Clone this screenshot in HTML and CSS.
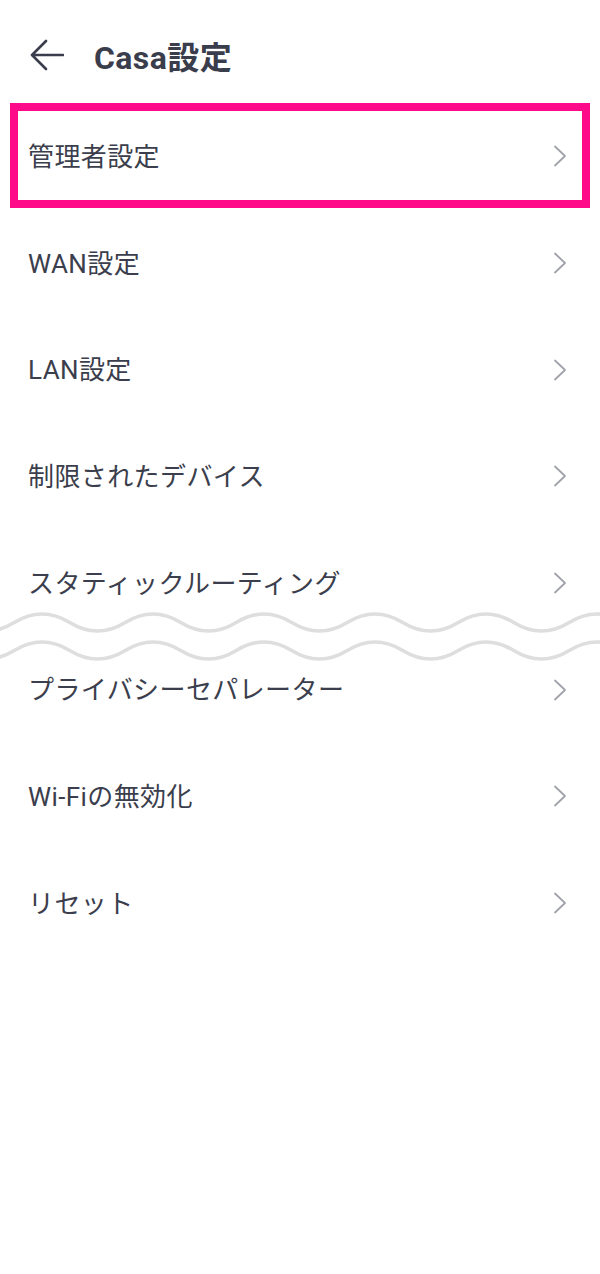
FILE: index.html
```html
<!DOCTYPE html>
<html lang="ja">
<head>
  <meta charset="UTF-8">
  <meta name="viewport" content="width=device-width, initial-scale=1.0">
  <title>Casa設定</title>
  <link rel="stylesheet" href="styles.css">
</head>
<body>
  <div class="header">
    <svg class="back" width="34" height="32" viewBox="0 0 34 32">
      <path d="M33 16H3M16 2L2 16l14 14" fill="none" stroke="#3a3d4b" stroke-width="2.6" stroke-linecap="round" stroke-linejoin="round"/>
    </svg>
    <h1 class="title">Casa設定</h1>
  </div>

  <div class="menu">
    <div class="row highlight"><span>管理者設定</span><svg class="chev" width="14" height="22" viewBox="0 0 14 22"><path d="M2 1.5l10 9.5-10 9.5" fill="none" stroke="#a1a3ab" stroke-width="1.8" stroke-linecap="round" stroke-linejoin="round"/></svg></div>
    <div class="row"><span>WAN設定</span><svg class="chev" width="14" height="22" viewBox="0 0 14 22"><path d="M2 1.5l10 9.5-10 9.5" fill="none" stroke="#a1a3ab" stroke-width="1.8" stroke-linecap="round" stroke-linejoin="round"/></svg></div>
    <div class="row"><span>LAN設定</span><svg class="chev" width="14" height="22" viewBox="0 0 14 22"><path d="M2 1.5l10 9.5-10 9.5" fill="none" stroke="#a1a3ab" stroke-width="1.8" stroke-linecap="round" stroke-linejoin="round"/></svg></div>
    <div class="row"><span>制限されたデバイス</span><svg class="chev" width="14" height="22" viewBox="0 0 14 22"><path d="M2 1.5l10 9.5-10 9.5" fill="none" stroke="#a1a3ab" stroke-width="1.8" stroke-linecap="round" stroke-linejoin="round"/></svg></div>
    <div class="row"><span>スタティックルーティング</span><svg class="chev" width="14" height="22" viewBox="0 0 14 22"><path d="M2 1.5l10 9.5-10 9.5" fill="none" stroke="#a1a3ab" stroke-width="1.8" stroke-linecap="round" stroke-linejoin="round"/></svg></div>
    <div class="row"><span>プライバシーセパレーター</span><svg class="chev" width="14" height="22" viewBox="0 0 14 22"><path d="M2 1.5l10 9.5-10 9.5" fill="none" stroke="#a1a3ab" stroke-width="1.8" stroke-linecap="round" stroke-linejoin="round"/></svg></div>
    <div class="row"><span>Wi-Fiの無効化</span><svg class="chev" width="14" height="22" viewBox="0 0 14 22"><path d="M2 1.5l10 9.5-10 9.5" fill="none" stroke="#a1a3ab" stroke-width="1.8" stroke-linecap="round" stroke-linejoin="round"/></svg></div>
    <div class="row"><span>リセット</span><svg class="chev" width="14" height="22" viewBox="0 0 14 22"><path d="M2 1.5l10 9.5-10 9.5" fill="none" stroke="#a1a3ab" stroke-width="1.8" stroke-linecap="round" stroke-linejoin="round"/></svg></div>

    <!-- break marker between the two halves of the list -->
    <svg class="wave" width="600" height="70" viewBox="0 0 600 70">
      <path d="M-96.75 23.5Q-69 6.5 -41.25 23.5T14.25 23.5T69.75 23.5T125.25 23.5T180.75 23.5T236.25 23.5T291.75 23.5T347.25 23.5T402.75 23.5T458.25 23.5T513.75 23.5T569.25 23.5T624.75 23.5T680.25 23.5" fill="none" stroke="#dedede" stroke-width="3.6"/>
      <path d="M-96.75 51.5Q-69 34.5 -41.25 51.5T14.25 51.5T69.75 51.5T125.25 51.5T180.75 51.5T236.25 51.5T291.75 51.5T347.25 51.5T402.75 51.5T458.25 51.5T513.75 51.5T569.25 51.5T624.75 51.5T680.25 51.5" fill="none" stroke="#dedede" stroke-width="3.6"/>
    </svg>
  </div>
</body>
</html>
```

FILE: styles.css
```css
body {
  margin: 0;
  background: #fff;
  color: #3a3d4b;
  font-family: Roboto, "Noto Sans CJK JP", sans-serif;
}

.header {
  box-sizing: border-box;
  height: 103px;
  padding: 6px 0 0 30px;
  display: flex;
  align-items: center;
  gap: 30px;
}

.back {
  display: block;
  flex-shrink: 0;
}

.title {
  margin: 0;
  font-size: 32px;
  font-weight: 700;
  color: #3a3d4b;
  letter-spacing: 0.4px;
}

.menu {
  position: relative;
}

.row {
  position: relative;
  box-sizing: border-box;
  height: 106.7px;
  padding: 0 33px 0 28px;
  display: flex;
  align-items: center;
  justify-content: space-between;
  font-size: 26px;
  color: #3b3e4c;
}

.row span {
  margin-bottom: 4px;
  letter-spacing: 0.4px;
}

.chev {
  display: block;
}

.highlight::after {
  content: "";
  position: absolute;
  top: 0;
  left: 10px;
  right: 10px;
  bottom: 2px;
  border: 8px solid #ff0a89;
}

.wave {
  position: absolute;
  left: 0;
  top: 496px;
  display: block;
}
```
